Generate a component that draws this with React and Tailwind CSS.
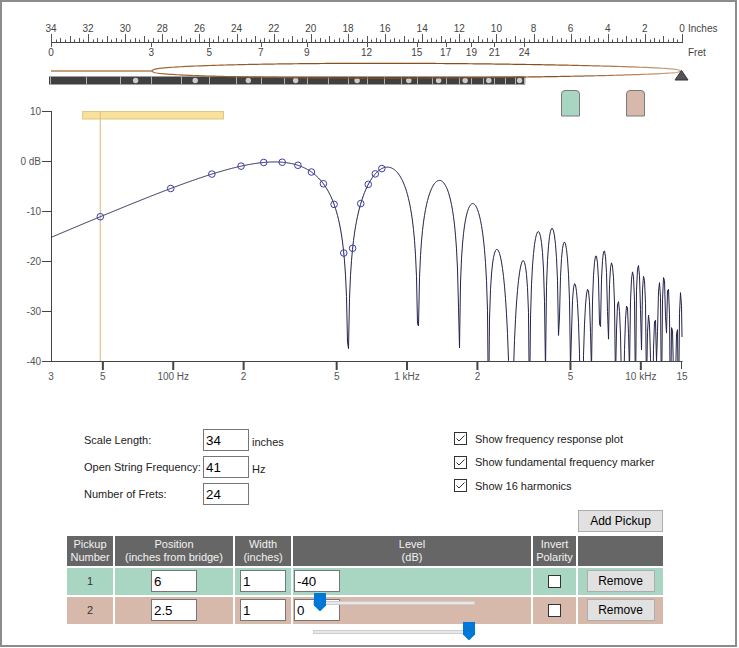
import React from "react";

const X0 = 51, X1 = 682;
const SCALE = 34, OPEN_F = 41, FRETS = 24, FRETTED = 3;
const PPI = (X1 - X0) / SCALE;
const xInch = (d) => X1 - d * PPI;
const xFret = (n) => X0 + (X1 - X0) * (1 - Math.pow(2, -n / 12));
const FMIN = 30, FMAX = 15000;
const PPD = (X1 - X0) / Math.log10(FMAX / FMIN);
const xFreq = (f) => X0 + PPD * Math.log10(f / FMIN);
const yDb = (db) => 161 - 5 * db;

const pickups = [
  { n: 1, pos: 6, width: 1, level: -40, bg: "#a9d5c3" },
  { n: 2, pos: 2.5, width: 1, level: 0, bg: "#d7b9ab" },
];

const LV = SCALE * Math.pow(2, -FRETTED / 12);
const F0 = OPEN_F * Math.pow(2, FRETTED / 12);

function response(f) {
  const k = f / F0;
  let h = 0;
  for (const p of pickups) {
    const g = Math.pow(10, p.level / 20);
    const u = (Math.PI * k * p.width) / (2 * LV);
    const sinc = u === 0 ? 1 : Math.sin(u) / u;
    h += g * Math.sin((Math.PI * k * p.pos) / LV) * sinc;
  }
  return 20 * Math.log10(Math.max(Math.abs(h), 1e-9));
}

const FF = "Liberation Sans, Arial, sans-serif";

function Drawing() {
  const ticks = [];
  for (let q = 0; q <= SCALE * 4; q++) {
    const x = Math.round(xInch(q / 4)) + 0.5;
    const h = q % 8 === 0 ? 8 : q % 4 === 0 ? 6 : q % 2 === 0 ? 4 : 2.5;
    ticks.push(<line key={q} x1={x} x2={x} y1={42} y2={42 - h} stroke="#555" strokeWidth="1" />);
  }
  const inchLabels = [];
  for (let d = 0; d <= SCALE; d += 2) {
    inchLabels.push(
      <text key={d} x={xInch(d)} y={32} textAnchor="middle" fontSize="10" fill="#444" fontFamily={FF}>{d}</text>
    );
  }
  const fretLabelNums = [0, 3, 5, 7, 9, 12, 15, 17, 19, 21, 24];
  const fretLabels = fretLabelNums.map((n) => (
    <g key={n}>
      <line x1={Math.round(xFret(n)) + 0.5} x2={Math.round(xFret(n)) + 0.5} y1={42} y2={47} stroke="#555" />
      <text x={xFret(n)} y={56} textAnchor="middle" fontSize="10" fill="#444" fontFamily={FF}>{n}</text>
    </g>
  ));

  const fretLines = [];
  for (let n = 1; n <= FRETS; n++) {
    const x = Math.round(xFret(n)) + 0.5;
    fretLines.push(<line key={n} x1={x} x2={x} y1={76.5} y2={84.5} stroke="#b4b4b4" strokeWidth="1" />);
  }
  const dots = [3, 5, 7, 9, 12, 15, 17, 19, 21, 24].map((n) => (
    <circle key={n} cx={(xFret(n) + xFret(n - 1)) / 2} cy={80.5} r={2.7} fill="#cccccc" />
  ));

  const xs = xFret(FRETTED), xe = 681;
  const env = (t) => (Math.pow(Math.max(Math.sin(Math.PI * t), 0), 0.4) * (1 - 0.25 * t)) / 0.872;
  let top = "", bot = "";
  for (let i = 0; i <= 200; i++) {
    const t = i / 200;
    const x = xs + (xe - xs) * t;
    top += (i ? "L" : "M") + x.toFixed(2) + "," + (71 - 7.6 * env(t)).toFixed(2);
    bot += (i ? "L" : "M") + x.toFixed(2) + "," + (71 + 7 * env(t)).toFixed(2);
  }

  const samples = [X0];
  for (let i = 0; i < X1 - X0; i++) samples.push(X0 + i + 0.5);
  samples.push(X1);
  let curve = "";
  samples.forEach((x, i) => {
    const f = FMIN * Math.pow(10, (x - X0) / PPD);
    const y = Math.min(yDb(response(f)), 420);
    curve += (i === 0 ? "M" : "L") + x + "," + y.toFixed(2);
  });
  const harmonics = [];
  for (let n = 1; n <= 16; n++) {
    const f = n * F0;
    harmonics.push(
      <circle key={n} cx={xFreq(f)} cy={yDb(response(f))} r={3.3} fill="none" stroke="#3b3bb0" strokeWidth="1" />
    );
  }

  const yTicks = [10, 0, -10, -20, -30, -40];
  const xTicks = [
    { f: 30, l: "3", t: false },
    { f: 50, l: "5", t: true },
    { f: 100, l: "100 Hz", t: true },
    { f: 200, l: "2", t: true },
    { f: 500, l: "5", t: true },
    { f: 1000, l: "1 kHz", t: true },
    { f: 2000, l: "2", t: true },
    { f: 5000, l: "5", t: true },
    { f: 10000, l: "10 kHz", t: true },
    { f: 15000, l: "15", t: "thin" },
  ];

  const xf0 = xFreq(F0);
  const xLo = xFreq(OPEN_F), xHi = xFreq(OPEN_F * Math.pow(2, FRETS / 12));

  return (
    <svg width="733" height="388" viewBox="2 2 733 388" className="block">
      <defs>
        <linearGradient id="strg" gradientUnits="userSpaceOnUse" x1={xs} x2={xe} y1="0" y2="0">
          <stop offset="0" stopColor="#a06c3c" />
          <stop offset="0.35" stopColor="#8a4d1c" />
          <stop offset="0.75" stopColor="#8a4d1c" />
          <stop offset="1" stopColor="#caa886" />
        </linearGradient>
        <clipPath id="plotclip">
          <rect x={X0} y={100} width={X1 - X0 + 2} height={261} />
        </clipPath>
      </defs>

      <line x1={X0} x2={X1 + 1} y1={42.5} y2={42.5} stroke="#444" />
      {ticks}
      {inchLabels}
      <text x={688} y={32} fontSize="10" fill="#444" fontFamily={FF}>Inches</text>
      {fretLabels}
      <text x={688} y={56} fontSize="10" fill="#444" fontFamily={FF}>Fret</text>

      <rect x={49} y={76.5} width={xFret(FRETS) - 48} height={8} fill="#404040" />
      <line x1={50.5} x2={50.5} y1={76.5} y2={84.5} stroke="#b0b0b0" />
      {fretLines}
      {dots}

      <line x1={X0} x2={xs} y1={71} y2={71} stroke="#c2a27f" strokeWidth="2" />
      <path d={top} fill="none" stroke="url(#strg)" strokeWidth="1.2" />
      <path d={bot} fill="none" stroke="url(#strg)" strokeWidth="1.2" />

      <path d="M681.5,70.5 L688,80 L675,80 Z" fill="#555" stroke="#333" strokeWidth="1" />

      {pickups.map((p) => {
        const c = xInch(p.pos);
        const w = p.width * PPI;
        const l = Math.round(c - w / 2) + 0.5;
        const r = Math.round(c + w / 2) - 0.5;
        return (
          <path
            key={p.n}
            d={`M${l},116 V94 Q${l},90.5 ${l + 3.5},90.5 H${r - 3.5} Q${r},90.5 ${r},94 V116 Z`}
            fill={p.bg}
            stroke="#7a7a7a"
            strokeWidth="1"
          />
        );
      })}

      <rect x={xLo} y={111.5} width={xHi - xLo} height={7.5} fill="#f8e19a" stroke="#dcc686" strokeWidth="1" />
      <line x1={xf0} x2={xf0} y1={111} y2={361} stroke="#dcc38a" strokeWidth="1.2" />

      <line x1={51.5} x2={51.5} y1={111} y2={361.5} stroke="#444" />
      <line x1={51} x2={X1 + 0.5} y1={361.5} y2={361.5} stroke="#444" />
      {yTicks.map((d) => (
        <g key={d}>
          <line x1={42} x2={51} y1={yDb(d) + 0.5} y2={yDb(d) + 0.5} stroke="#444" />
          <text x={41} y={yDb(d) + 3.5} textAnchor="end" fontSize="10" fill="#555" fontFamily={FF}>
            {d === 0 ? "0 dB" : d}
          </text>
        </g>
      ))}
      {xTicks.map((t) => {
        const x = xFreq(t.f);
        return (
          <g key={t.f}>
            {t.t === true && <line x1={x} x2={x} y1={361} y2={370} stroke="#444" strokeWidth="2" />}
            {t.t === "thin" && <line x1={x - 0.5} x2={x - 0.5} y1={361} y2={369} stroke="#444" strokeWidth="1" />}
            <text x={x} y={380} textAnchor="middle" fontSize="10" fill="#555" fontFamily={FF}>{t.l}</text>
          </g>
        );
      })}

      <g clipPath="url(#plotclip)">
        <path d={curve} fill="none" stroke="#23234a" strokeWidth="1" />
      </g>
      {harmonics}
    </svg>
  );
}

function CheckedBox() {
  return (
    <svg width="13" height="13" className="block shrink-0">
      <rect x="0.5" y="0.5" width="12" height="12" fill="white" stroke="#333" />
      <path d="M2.5 6.5 L5 9 L10.5 3.5" fill="none" stroke="#333" strokeWidth="1" />
    </svg>
  );
}

function EmptyBox() {
  return (
    <svg width="13" height="13" className="block mx-auto">
      <rect x="0.5" y="0.5" width="12" height="12" fill="white" stroke="#333" />
    </svg>
  );
}

function Slider({ value }) {
  const pos = (value + 40) / 40;
  return (
    <div className="absolute left-[20px] top-[25px] w-[162px] h-[18px] z-10">
      <div className="absolute left-0 right-0 top-[8px] h-[4px] bg-[#e8e8e8] border border-[#cdcdcd]" />
      <svg width="12" height="18" className="absolute top-0" style={{ left: 1 + pos * 149 }}>
        <path d="M0,0 H12 V12.5 L6.5,18 H5.5 L0,12.5 Z" fill="#0078d7" />
      </svg>
    </div>
  );
}

const inputCls =
  "w-[46px] h-[22px] border border-[#767676] bg-white pl-[2px] text-[13.33px] text-black font-['Liberation_Sans',Arial,sans-serif] outline-none";

export default function App() {
  return (
    <div className="w-[737px] h-[647px] border-2 border-[#8c8c8c] bg-white overflow-hidden text-[11px] text-[#222] font-['Liberation_Sans',Arial,sans-serif]">
      <Drawing />

      <div className="mt-[37px] flex">
        <div className="ml-[82px] w-[370px] mt-[2px] grid grid-cols-[119px_46px_auto] gap-y-[5px] items-center content-start">
          <span>Scale Length:</span>
          <input className={inputCls} defaultValue="34" />
          <span className="ml-[3px] pt-[4px]">inches</span>
          <span>Open String Frequency:</span>
          <input className={inputCls} defaultValue="41" />
          <span className="ml-[3px] pt-[4px]">Hz</span>
          <span>Number of Frets:</span>
          <input className={inputCls} defaultValue="24" />
          <span />
        </div>
        <div className="flex flex-col">
          {["Show frequency response plot", "Show fundamental frequency marker", "Show 16 harmonics"].map((t) => (
            <div key={t} className="h-[23.5px] flex items-center gap-[8px]">
              <CheckedBox />
              <span>{t}</span>
            </div>
          ))}
        </div>
      </div>

      <div className="ml-[63px] w-[600px] mt-[5px]">
        <div className="flex justify-end pr-[2px]">
          <button className="w-[85px] h-[22px] bg-[#e1e1e1] border border-[#adadad] text-[12px] text-black leading-none">
            Add Pickup
          </button>
        </div>
        <table className="mt-[2px] w-[600px] table-fixed border-separate border-spacing-[2px]">
          <colgroup>
            <col className="w-[46px]" />
            <col className="w-[118px]" />
            <col className="w-[56px]" />
            <col className="w-[238px]" />
            <col className="w-[43px]" />
            <col className="w-[85px]" />
          </colgroup>
          <thead>
            <tr>
              {[
                ["Pickup", "Number"],
                ["Position", "(inches from bridge)"],
                ["Width", "(inches)"],
                ["Level", "(dB)"],
                ["Invert", "Polarity"],
                ["", ""],
              ].map(([a, b], i) => (
                <th
                  key={i}
                  className="h-[30px] p-0 bg-[#666666] text-[#f2f2f2] font-normal text-[11px] leading-[13px] text-center align-middle"
                >
                  {a}
                  {a && <br />}
                  {b}
                </th>
              ))}
            </tr>
          </thead>
          <tbody>
            {pickups.map((p) => (
              <tr key={p.n}>
                <td className="h-[27px] p-0 text-center align-middle text-[#333]" style={{ backgroundColor: p.bg }}>
                  {p.n}
                </td>
                <td className="h-[27px] p-0 align-middle" style={{ backgroundColor: p.bg }}>
                  <div className="flex justify-center pb-[1px]">
                    <input className={inputCls} defaultValue={String(p.pos)} />
                  </div>
                </td>
                <td className="h-[27px] p-0 align-middle" style={{ backgroundColor: p.bg }}>
                  <div className="flex justify-center pb-[1px]">
                    <input className={inputCls} defaultValue={String(p.width)} />
                  </div>
                </td>
                <td className="h-[27px] p-0 align-middle relative" style={{ backgroundColor: p.bg }}>
                  <div className="flex pl-[1px] pb-[1px]">
                    <input className={inputCls} defaultValue={String(p.level)} />
                  </div>
                  <Slider value={p.level} />
                </td>
                <td className="h-[27px] p-0 align-middle" style={{ backgroundColor: p.bg }}>
                  <EmptyBox />
                </td>
                <td className="h-[27px] p-0 align-middle" style={{ backgroundColor: p.bg }}>
                  <div className="flex justify-center pb-[1px]">
                    <button className="w-[68px] h-[22px] bg-[#e1e1e1] border border-[#adadad] text-[12px] text-black leading-none">
                      Remove
                    </button>
                  </div>
                </td>
              </tr>
            ))}
          </tbody>
        </table>
      </div>
    </div>
  );
}
